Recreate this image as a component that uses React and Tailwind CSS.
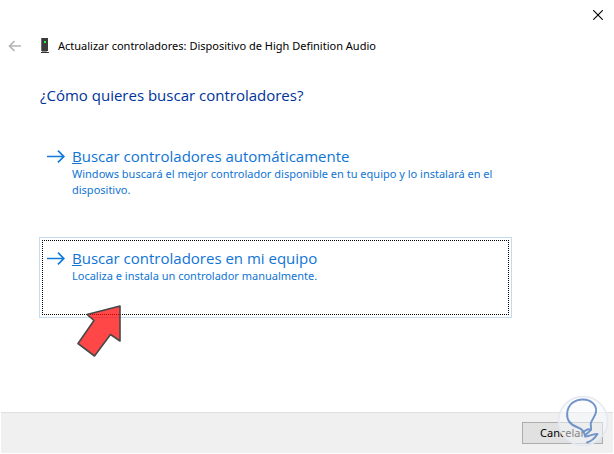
import React from "react";

const options = [
  {
    id: "auto",
    accessKey: "B",
    title: "uscar controladores automáticamente",
    description:
      "Windows buscará el mejor controlador disponible en tu equipo y lo instalará en el dispositivo.",
    focused: false,
  },
  {
    id: "manual",
    accessKey: "B",
    title: "uscar controladores en mi equipo",
    description: "Localiza e instala un controlador manualmente.",
    focused: true,
  },
];

const BackIcon = () => (
  <svg width="14" height="12" viewBox="0 0 14 12" fill="none" stroke="#b4b4b4" strokeWidth="1.7">
    <path d="M13 6H1.5M6.5 1L1.5 6l5 5" />
  </svg>
);

const CloseIcon = () => (
  <svg width="10" height="10" viewBox="0 0 10 10" fill="none" stroke="#000" strokeWidth="1.1">
    <path d="M0.2 0.2l9.6 9.6M9.8 0.2L0.2 9.8" />
  </svg>
);

const DeviceIcon = () => (
  <svg width="10" height="16" viewBox="0 0 10 16" shapeRendering="crispEdges">
    <rect x="1" y="0" width="7" height="13" fill="#3c3c3c" />
    <rect x="1" y="0" width="1" height="13" fill="#6a6a6a" />
    <rect x="4" y="3" width="2" height="2" fill="#35f03c" />
    <rect x="2" y="13" width="5" height="1" fill="#9a9a9a" />
    <rect x="1" y="14" width="8" height="1" fill="#303030" />
  </svg>
);

const ArrowIcon = () => (
  <svg
    className="shrink-0"
    width="18"
    height="14"
    viewBox="0 0 18 14"
    fill="none"
    stroke="#0f7bdc"
    strokeWidth="1.7"
  >
    <path d="M0 7.500h16.6M11 1.700L16.8 7.500 11 13.300" />
  </svg>
);

// Red pointer laid over the focused option
const Pointer = () => (
  <svg
    className="pointer-events-none absolute top-[66px] left-[36px]"
    width="48"
    height="56"
    viewBox="0 0 48 56"
  >
    <path
      d="M44 2L11 10.500L18 16.500L2 39.500L18.500 52L34.500 30.500L44 37z"
      fill="#ff0000"
      fillOpacity="0.72"
      stroke="#484848"
      strokeWidth="1.6"
      strokeLinejoin="round"
    />
  </svg>
);

const BulbBadge = () => (
  <svg
    className="pointer-events-none absolute right-1 bottom-[6px]"
    width="52"
    height="52"
    viewBox="0 0 52 52"
    fill="none"
  >
    <circle cx="26" cy="26" r="24.5" fill="#f8f9fd" fillOpacity="0.5" stroke="#e3e8f2" strokeWidth="1.5" />
    <path
      d="M30 47.500C35 46 38 43 40.500 39C36 38.500 31 42 28 41.500C27 40 32 37.500 34 35C32 33.500 29 35 27 36.500M28 41.500C27.500 37 25.500 34 21 32.500C13.500 30 9.500 25 10.200 18C11 9.500 17.500 4.500 26 4.500C34 4.500 40 10 39 17C38.300 21.500 34.500 24.500 33.800 28.500C33.500 30.500 34.500 33 34 35"
      stroke="#7094c8"
      strokeWidth="1.9"
      strokeLinecap="round"
      strokeLinejoin="round"
    />
  </svg>
);

const Option = ({ option }) => (
  <button
    type="button"
    className={`relative block min-h-[81px] w-full border p-[2px] text-left ${
      option.focused ? "border-[#c5dbf0]" : "border-transparent"
    }`}
  >
    <span
      className={`flex min-h-[75px] gap-[7px] border border-dotted pt-[7px] pr-1 pl-1 ${
        option.focused ? "border-black" : "border-transparent"
      }`}
    >
      <span className="flex h-5 items-center">
        <ArrowIcon />
      </span>
      <span className="text-[#0f74d4]">
        <span className="block font-['Open_Sans',sans-serif] text-[15px] leading-5">
          <span className="underline">{option.accessKey}</span>
          {option.title}
        </span>
        <span className="block text-[11px] leading-4">{option.description}</span>
      </span>
    </span>
    {option.focused && <Pointer />}
  </button>
);

const App = () => {
  return (
    <div className="relative flex min-h-screen flex-col border border-white bg-white font-['Noto_Sans',sans-serif] text-black">
      <header>
        <div className="flex justify-end pt-[6px] pr-[7px]">
          <button type="button" aria-label="Cerrar" className="flex h-4 w-4 items-center justify-center">
            <CloseIcon />
          </button>
        </div>
        <div className="flex h-[46px] items-center pl-[7px]">
          <button type="button" aria-label="Atrás" disabled>
            <BackIcon />
          </button>
          <span className="ml-[18px]">
            <DeviceIcon />
          </span>
          <span className="ml-2 text-[11px]">
            Actualizar controladores: Dispositivo de High Definition Audio
          </span>
        </div>
      </header>

      <main className="flex-1 pt-[14px] pr-[101px] pl-[38px]">
        <h1 className="pl-px font-['Open_Sans',sans-serif] text-[15px] leading-6 text-[#003399]">
          ¿Cómo quieres buscar controladores?
        </h1>
        <div className="mt-7 flex flex-col gap-[21px]">
          {options.map((option) => (
            <Option key={option.id} option={option} />
          ))}
        </div>
      </main>

      <footer className="flex justify-end border-t border-[#dfdfdf] bg-[#f0f0f0] pt-[9px] pr-[10px] pb-[9px]">
        <button
          type="button"
          className="h-[22px] w-[81px] border border-[#adadad] bg-[#e1e1e1] text-[11px] leading-5"
        >
          Cancelar
        </button>
      </footer>
      <BulbBadge />
    </div>
  );
};

export default App;
